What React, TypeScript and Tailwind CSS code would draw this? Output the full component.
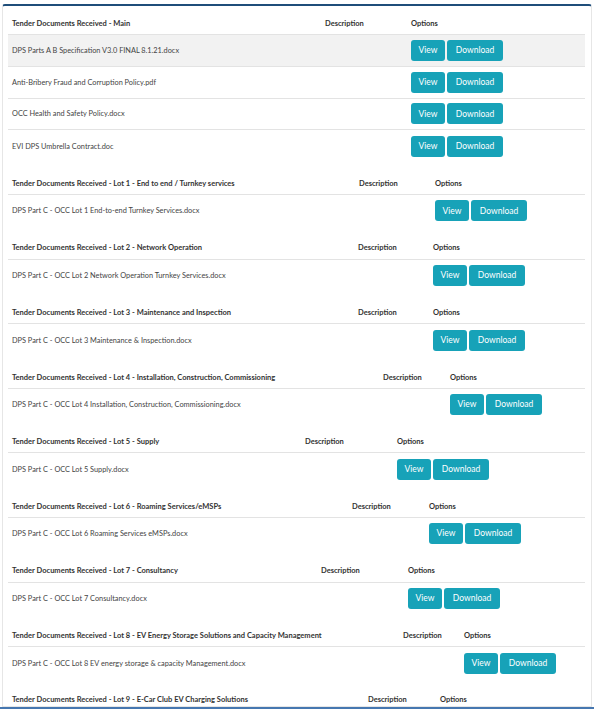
const sections = [
  {
    title: "Tender Documents Received - Main",
    cols: "grid-cols-[313px_86px_1fr]",
    files: [
      "DPS Parts A B Specification V3.0 FINAL 8.1.21.docx",
      "Anti-Bribery Fraud and Corruption Policy.pdf",
      "OCC Health and Safety Policy.docx",
      "EVI DPS Umbrella Contract.doc",
    ],
  },
  {
    title: "Tender Documents Received - Lot 1 - End to end / Turnkey services",
    cols: "grid-cols-[347px_76px_1fr]",
    files: ["DPS Part C - OCC Lot 1 End-to-end Turnkey Services.docx"],
  },
  {
    title: "Tender Documents Received - Lot 2 - Network Operation",
    cols: "grid-cols-[346px_75px_1fr]",
    files: ["DPS Part C - OCC Lot 2 Network Operation Turnkey Services.docx"],
  },
  {
    title: "Tender Documents Received - Lot 3 - Maintenance and Inspection",
    cols: "grid-cols-[346px_75px_1fr]",
    files: ["DPS Part C - OCC Lot 3 Maintenance & Inspection.docx"],
  },
  {
    title: "Tender Documents Received - Lot 4 - Installation, Construction, Commissioning",
    cols: "grid-cols-[371px_67px_1fr]",
    files: ["DPS Part C - OCC Lot 4 Installation, Construction, Commissioning.docx"],
  },
  {
    title: "Tender Documents Received - Lot 5 - Supply",
    cols: "grid-cols-[293px_92px_1fr]",
    files: ["DPS Part C - OCC Lot 5 Supply.docx"],
  },
  {
    title: "Tender Documents Received - Lot 6 - Roaming Services/eMSPs",
    cols: "grid-cols-[340px_77px_1fr]",
    files: ["DPS Part C - OCC Lot 6 Roaming Services eMSPs.docx"],
  },
  {
    title: "Tender Documents Received - Lot 7 - Consultancy",
    cols: "grid-cols-[309px_87px_1fr]",
    files: ["DPS Part C - OCC Lot 7 Consultancy.docx"],
  },
  {
    title: "Tender Documents Received - Lot 8 - EV Energy Storage Solutions and Capacity Management",
    cols: "grid-cols-[391px_61px_1fr]",
    files: ["DPS Part C - OCC Lot 8 EV energy storage & capacity Management.docx"],
  },
  {
    title: "Tender Documents Received - Lot 9 - E-Car Club EV Charging Solutions",
    cols: "grid-cols-[356px_72px_1fr]",
    files: [],
  },
];

const DocTable = ({ title, cols, files, first }: { title: string; cols: string; files: string[]; first: boolean }) => {
  return (
    <div className="mb-[3.8px]">
      {/* Header row */}
      <div className={`grid ${cols} h-[29px] items-end pb-[5px] border-b border-[#e3e3e3] font-bold text-[7.5px] text-[#333]`}>
        <div className="pl-1 whitespace-nowrap">{title}</div>
        <div className="pl-1 whitespace-nowrap">Description</div>
        <div className="pl-1 whitespace-nowrap">Options</div>
      </div>

      {/* File rows */}
      {files.map((file, index) => (
        <div
          key={file}
          className={`grid ${cols} h-[31.8px] items-center text-[7.35px] text-[#444] ${
            index < files.length - 1 ? "border-b border-[#e3e3e3]" : ""
          } ${first && index === 0 ? "bg-[#f2f2f2]" : ""}`}
        >
          <div className="pl-1 whitespace-nowrap">{file}</div>
          <div />
          <div className="pl-1 flex gap-[2px]">
            <button className="h-[21px] w-[34px] rounded-[3px] bg-[#17a2b8] text-white text-[8.5px]">View</button>
            <button className="h-[21px] w-[56px] rounded-[3px] bg-[#17a2b8] text-white text-[8.5px]">Download</button>
          </div>
        </div>
      ))}
    </div>
  );
};

export default function App() {
  return (
    <div className="h-[709px] w-[594px] flex flex-col bg-white overflow-hidden font-['Lato',sans-serif]">
      <div className="flex-1 min-h-0 overflow-hidden pt-1 px-[2px]">
        <div className="h-full border border-[#e6e6e6] border-t-2 border-t-[#1f4e7a] rounded-t-[3px] px-[5px] pr-[6px]">
          {sections.map((s, i) => (
            <DocTable key={s.title} title={s.title} cols={s.cols} files={s.files} first={i === 0} />
          ))}
        </div>
      </div>
      <div className="h-[2px] bg-[#4677b0]" />
    </div>
  );
}
